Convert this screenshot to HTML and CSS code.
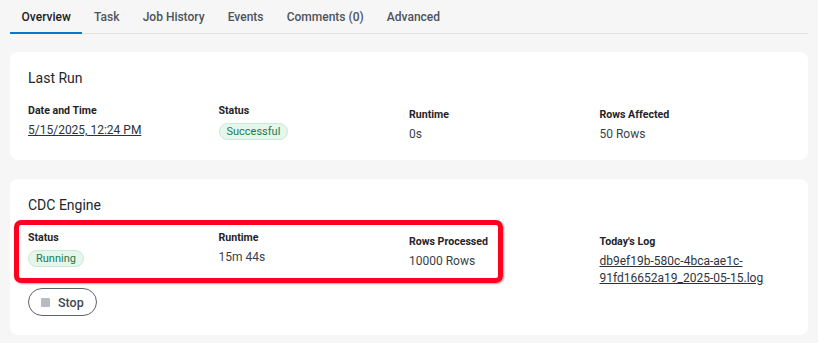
FILE: index.html
```html
<!DOCTYPE html>
<html lang="en">
<head>
    <meta charset="UTF-8">
    <meta name="viewport" content="width=device-width, initial-scale=1.0">
    <title>Job Overview</title>
    <link rel="stylesheet" href="styles.css">
</head>
<body>

    <nav class="tabs">
        <a class="tab active" href="#">Overview</a>
        <a class="tab" href="#">Task</a>
        <a class="tab" href="#">Job History</a>
        <a class="tab" href="#">Events</a>
        <a class="tab" href="#">Comments (0)</a>
        <a class="tab" href="#">Advanced</a>
    </nav>

    <main class="content">
        <!-- Last run -->
        <section class="card">
            <h3 class="card-title">Last Run</h3>
            <div class="fields">
                <div class="field">
                    <div class="label">Date and Time</div>
                    <a class="value link" href="#">5/15/2025, 12:24 PM</a>
                </div>
                <div class="field">
                    <div class="label">Status</div>
                    <span class="badge">Successful</span>
                </div>
                <div class="field low">
                    <div class="label">Runtime</div>
                    <div class="value">0s</div>
                </div>
                <div class="field low">
                    <div class="label">Rows Affected</div>
                    <div class="value">50 Rows</div>
                </div>
            </div>
        </section>

        <!-- CDC engine -->
        <section class="card">
            <h3 class="card-title">CDC Engine</h3>
            <div class="fields">
                <div class="field">
                    <div class="label">Status</div>
                    <span class="badge">Running</span>
                </div>
                <div class="field">
                    <div class="label">Runtime</div>
                    <div class="value">15m 44s</div>
                </div>
                <div class="field low">
                    <div class="label">Rows Processed</div>
                    <div class="value">10000 Rows</div>
                </div>
                <div class="field low">
                    <div class="label">Today's Log</div>
                    <a class="value link" href="#">db9ef19b-580c-4bca-ae1c-<br>91fd16652a19_2025-05-15.log</a>
                </div>
            </div>
            <button class="stop-btn"><span class="stop-icon"></span>Stop</button>
            <div class="highlight"></div>
        </section>
    </main>

</body>
</html>
```

FILE: styles.css
```css
body{
    margin:0;
    background:#f6f6f6;
    font-family:Roboto, "Liberation Sans", sans-serif;
    color:#3a3f47;
}

/* Tabs */
.tabs{
    display:flex;
    margin:0 10px;
    border-bottom:1px solid #e2e2e2;
}

.tab{
    padding:9px 11.6px 7px;
    font-size:12px;
    line-height:16px;
    font-weight:500;
    color:#4d535c;
    text-decoration:none;
    border-bottom:2px solid transparent;
    margin-bottom:-1px;
}

.tab.active{
    color:#1e2126;
    border-bottom-color:#0b77c7;
}

/* Cards */
.content{
    display:flex;
    flex-direction:column;
    gap:19px;
    padding:18px 10px 0;
}

.card{
    position:relative;
    background:#fff;
    border-radius:8px;
    padding:16px 18px 17px;
}

.card-title{
    margin:0 0 15px;
    font-size:14px;
    line-height:20px;
    font-weight:400;
    color:#23272d;
}

.fields{
    display:grid;
    grid-template-columns:repeat(4, 1fr);
}

.field.low{
    padding-top:4px;
}

.label{
    font-size:10.6px;
    line-height:16px;
    font-weight:700;
    color:#1f2328;
}

.value{
    display:block;
    margin-top:3px;
    font-size:12px;
    line-height:17px;
    color:#3a3f47;
}

.link{
    color:#2e333b;
    text-decoration:underline;
}

.badge{
    display:inline-block;
    margin-top:4px;
    padding:0 7px;
    font-size:11px;
    line-height:15px;
    color:#1d7a4b;
    background:#e5f6ec;
    border:1px solid #c6ead5;
    border-radius:9px;
}

/* Stop button */
.stop-btn{
    display:flex;
    align-items:center;
    gap:8px;
    margin:1px 0 2px;
    height:28px;
    padding:0 12px;
    background:#fff;
    border:1px solid #5c626b;
    border-radius:14px;
    font-family:inherit;
    font-size:12.5px;
    font-weight:500;
    color:#3f4652;
}

.stop-icon{
    width:9px;
    height:9px;
    background:#b8bcc2;
    border-radius:1px;
}

/* Annotation box */
.highlight{
    position:absolute;
    left:4px;
    top:41px;
    width:479px;
    height:53px;
    border:5px solid #ff0020;
    border-radius:7px;
    box-shadow:1px 1px 2px rgba(0,0,0,.35);
}
```
